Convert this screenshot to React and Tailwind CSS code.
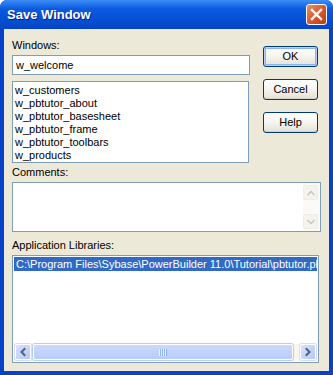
import React from 'react';

const font = { fontFamily: '"Liberation Sans", Arial, sans-serif' };

const windows = [
  'w_customers',
  'w_pbtutor_about',
  'w_pbtutor_basesheet',
  'w_pbtutor_frame',
  'w_pbtutor_toolbars',
  'w_products',
];

// XP push button
const XpButton = ({ label, isDefault }) => (
  <button
    className={
      'w-[55px] h-[21px] rounded-[3px] border border-[#003C74] bg-linear-to-b from-[#FFFFFF] via-[#F5F4EF] to-[#E3E1D6] text-[11px] leading-none text-black flex items-center justify-center ' +
      (isDefault ? 'shadow-[inset_0_0_0_1px_#B9D1F9,inset_0_0_0_2px_#8DB2F0]' : 'shadow-[inset_0_-1px_0_#D6D0C5]')
    }
  >
    {label}
  </button>
);

const Chevron = ({ dir, color, width = 2 }) => {
  const pts = {
    up: '3,7.5 6,4.5 9,7.5',
    down: '3,4.5 6,7.5 9,4.5',
    left: '7.5,3 4.5,6 7.5,9',
    right: '4.5,3 7.5,6 4.5,9',
  }[dir];
  return (
    <svg width="12" height="12" viewBox="0 0 12 12">
      <polyline points={pts} fill="none" stroke={color} strokeWidth={width} strokeLinecap="square" />
    </svg>
  );
};

// disabled vertical scroll arrow
const DisabledArrow = ({ dir }) => (
  <div className="w-[15px] h-[15px] rounded-[2px] border border-[#EFEDE4] bg-[#F4F3EE] flex items-center justify-center">
    <Chevron dir={dir} color="#C9C7BA" width={1.5} />
  </div>
);

// blue horizontal scroll arrow
const BlueArrow = ({ dir }) => (
  <div className="w-[16px] h-[16px] rounded-[2px] border border-[#FFFFFF] bg-linear-to-br from-[#D6E2FD] to-[#B5C9F6] shadow-[0_0_0_1px_#D3DEF5] flex items-center justify-center">
    <Chevron dir={dir} color="#4D6185" />
  </div>
);

export default function App() {
  return (
    <div className="w-[333px] h-[375px] bg-white" style={font}>
      <div className="w-full h-full flex flex-col rounded-t-[7px] overflow-hidden bg-[#0842C8]">
        {/* Title bar */}
        <div className="h-[29px] shrink-0 flex items-center pl-[7px] pr-[6px] bg-linear-to-b from-[#3D8DF7] via-[#0A5BE1] via-30% to-[#0445C6]">
          <span className="text-white font-bold text-[13px] leading-none [text-shadow:1px_1px_0_#0A1E7A]">
            Save Window
          </span>
          <div className="ml-auto w-[21px] h-[21px] rounded-[3px] border border-white bg-linear-to-br from-[#E98C6C] via-[#D9592F] to-[#BF3A16] flex items-center justify-center">
            <svg width="13" height="13" viewBox="0 0 13 13">
              <path d="M2 2 L11 11 M11 2 L2 11" stroke="#FFFFFF" strokeWidth="2.4" strokeLinecap="square" />
            </svg>
          </div>
        </div>

        {/* Body */}
        <div className="flex-1 mx-[4px] mb-[4px] bg-[#ECE9D8] px-[8px] pt-[10px] text-[11px] text-black">
          <div className="flex">
            <div className="flex flex-col w-[238px]">
              <div className="h-[13px] leading-[13px]">Windows:</div>
              <div className="mt-[3px] h-[20px] border border-[#7F9DB9] bg-white flex items-center pl-[3px]">
                w_welcome
              </div>
              <div className="mt-[6px] w-[237px] h-[82px] border border-[#7F9DB9] bg-white pl-[2px] pt-[2px]">
                {windows.map((w) => (
                  <div key={w} className="h-[13px] leading-[13px]">{w}</div>
                ))}
              </div>
            </div>
            <div className="ml-[13px] pt-[7px] flex flex-col gap-[12px]">
              <XpButton label="OK" isDefault />
              <XpButton label="Cancel" />
              <XpButton label="Help" />
            </div>
          </div>

          <div className="mt-[3px] h-[13px] leading-[13px]">Comments:</div>
          <div className="mt-[3px] w-[309px] h-[50px] border border-[#7F9DB9] bg-white flex">
            <div className="flex-1" />
            <div className="w-[17px] flex flex-col justify-between py-[2px] pr-[1px] bg-[#FBFAF7]">
              <DisabledArrow dir="up" />
              <DisabledArrow dir="down" />
            </div>
          </div>

          <div className="mt-[7px] h-[13px] leading-[13px]">Application Libraries:</div>
          <div className="mt-[3px] w-[307px] h-[108px] border border-[#7F9DB9] bg-white flex flex-col p-[1px]">
            <div className="flex-1">
              <div className="h-[14px] leading-[14px] bg-[#316AC5] text-white pl-[2px] whitespace-nowrap overflow-hidden">
                C:\Program Files\Sybase\PowerBuilder 11.0\Tutorial\pbtutor.pbl
              </div>
            </div>
            <div className="h-[17px] flex items-center gap-[2px] px-[1px] pb-[1px] bg-[#F7F6F0]">
              <BlueArrow dir="left" />
              <div className="flex-1 h-[16px] pr-[5px]">
                <div className="h-full rounded-[2px] border border-[#FFFFFF] bg-linear-to-b from-[#CBDAFD] to-[#B8CCF8] shadow-[0_0_0_1px_#BBCDF4] flex items-center justify-center">
                  <svg width="8" height="7" viewBox="0 0 8 7">
                    <path d="M0.5 0 V7 M2.5 0 V7 M4.5 0 V7 M6.5 0 V7" stroke="#EEF3FE" strokeWidth="1" />
                    <path d="M1.5 0 V7 M3.5 0 V7 M5.5 0 V7 M7.5 0 V7" stroke="#8CB0F8" strokeWidth="1" />
                  </svg>
                </div>
              </div>
              <BlueArrow dir="right" />
            </div>
          </div>
        </div>
      </div>
    </div>
  );
}
